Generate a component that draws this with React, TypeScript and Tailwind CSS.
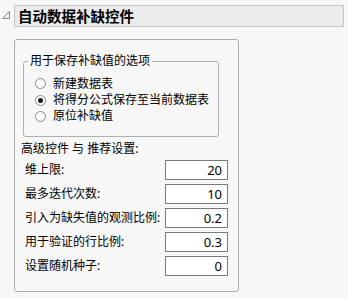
import React from "react";

const FONT = "font-['Noto_Sans','Noto_Sans_CJK_SC',sans-serif]";

function Radio({ checked, label, h }: { checked?: boolean; label: string; h: string }) {
  return (
    <div className={`flex items-center ${h}`}>
      <div className="ml-[11px] w-[11px] h-[11px] rounded-full border border-[#8a8a8a] bg-white flex items-center justify-center">
        {checked && <div className="w-[5px] h-[5px] rounded-full bg-[#1a1a1a]" />}
      </div>
      <span className="ml-[7px] text-[12px] leading-[16px] whitespace-nowrap">{label}</span>
    </div>
  );
}

function Row({ label, value }: { label: string; value: string }) {
  return (
    <div className="flex items-center h-[20px]">
      <div className="w-[144px] pl-[4px] text-[12px] leading-[16px] whitespace-nowrap">{label}</div>
      <div className="w-[63px] h-[20px] border border-[#7a7a7a] bg-white flex items-center justify-end pr-[5px] text-[13px] leading-[16px]">
        {value}
      </div>
    </div>
  );
}

export default function App() {
  return (
    <div className={`w-[348px] h-[298px] bg-[#f7f7f7] text-black overflow-hidden ${FONT}`}>
      <div className="flex items-start pt-[5px]">
        <div className="w-[14px] h-[22px]">
          <svg width="14" height="22" viewBox="0 0 14 22">
            <polygon points="9.5,6.5 9.5,13.5 2.5,13.5" fill="#f0f0f0" stroke="#8c8c8c" strokeWidth="1" />
          </svg>
        </div>
        <div className="w-[330px] h-[22px] border border-[#c3c3c3] bg-[#ebebeb] flex items-center pl-[3px] text-[14.5px] font-bold leading-[18px]">
          自动数据补缺控件
        </div>
      </div>
      <div className="ml-[14px] mt-[12px] w-[225px] h-[253px] border border-[#ababab] rounded-[3px] pt-[13px] pl-[6px]">
        <fieldset className="ml-[2px] w-[196px] border border-[#b0b0b0] rounded-[3px] pb-[12px]">
          <legend className="ml-[4px] px-[2px] text-[12px] leading-[16px]">用于保存补缺值的选项</legend>
          <div className="pt-[6px]">
            <Radio label="新建数据表" h="h-[17px]" />
            <Radio checked label="将得分公式保存至当前数据表" h="h-[16px]" />
            <Radio label="原位补缺值" h="h-[16px]" />
          </div>
        </fieldset>
        <div className="mt-[4px] text-[12px] leading-[16px] whitespace-nowrap">高级控件 与 推荐设置:</div>
        <div className="mt-[3px] flex flex-col gap-[4px]">
          <Row label="维上限:" value="20" />
          <Row label="最多迭代次数:" value="10" />
          <Row label="引入为缺失值的观测比例:" value="0.2" />
          <Row label="用于验证的行比例:" value="0.3" />
          <Row label="设置随机种子:" value="0" />
        </div>
      </div>
    </div>
  );
}
